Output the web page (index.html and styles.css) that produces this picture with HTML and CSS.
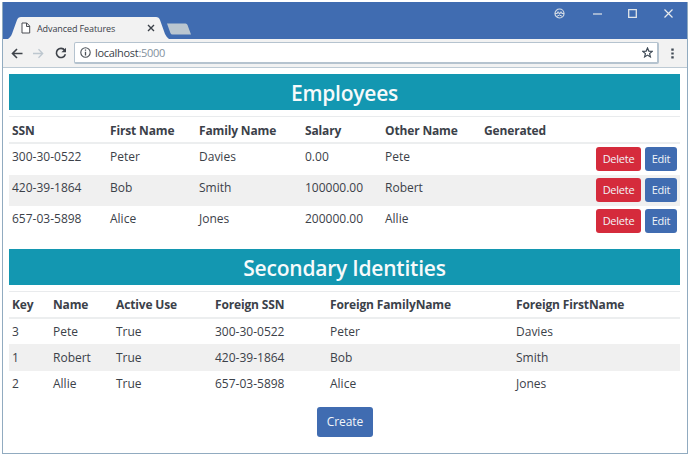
FILE: index.html
```html
<!DOCTYPE html>
<html lang="en">
<head>
<meta charset="utf-8">
<title>Advanced Features</title>
<link rel="stylesheet" href="styles.css">
</head>
<body>
<div class="window">
  <header class="titlebar">
    <div class="tab">
      <svg class="tab-shape" width="166" height="22" viewBox="0 0 166 22"><path d="M0 22 C3 20 4 17 5 14 L9 3 Q10 0 13 0 H148 Q151 0 152 3 L157 17 Q159 21 161 22Z" fill="#f2f2f2"/></svg>
      <svg class="page-icon" width="10" height="12" viewBox="0 0 10 12"><path d="M1 1H5.8L8.7 4V11H1ZM5.5 1V4.5H8.7" fill="#fff" stroke="#4a4d52"/></svg>
      <span class="tab-title">Advanced Features</span>
      <svg class="tab-close" width="8" height="8" viewBox="0 0 8 8"><path d="M1 1L7 7M7 1L1 7" stroke="#3b4048" stroke-width="1.4"/></svg>
    </div>
    <svg class="new-tab" width="26" height="12" viewBox="0 0 26 12"><path d="M1 .5H19.5Q21 .5 21.5 2L25 11.5H6.5Q5 11.5 4.4 10Z" fill="#bac6d0"/></svg>
    <div class="controls">
      <svg width="11" height="11" viewBox="0 0 11 11"><circle cx="5.5" cy="5.5" r="4.5" fill="none" stroke="#d4dce5" stroke-width="1.2"/><path d="M1 5.5H3.4V4H4.8V5.5H6.3V4H7.7V5.5H10M2.5 8.5Q5.5 5.5 8.5 8.5" fill="none" stroke="#d4dce5"/></svg>
      <svg width="9" height="11" viewBox="0 0 9 11"><path d="M0 6H9" stroke="#e1e5e8" stroke-width="1.2"/></svg>
      <svg width="9" height="9" viewBox="0 0 9 9"><path d="M.7 .7H8.3V8.3H.7Z" fill="none" stroke="#e1e5e8" stroke-width="1.3"/></svg>
      <svg width="9" height="9" viewBox="0 0 9 9"><path d="M.5 .5L8.5 8.5M8.5 .5L.5 8.5" stroke="#e8ebed" stroke-width="1.2"/></svg>
    </div>
  </header>
  <nav class="toolbar">
    <svg class="back" width="12" height="11" viewBox="0 0 12 11"><path d="M11.5 5.5H1.5M6 1L1.5 5.5L6 10" fill="none" stroke="#3e434a" stroke-width="1.6"/></svg>
    <svg class="forward" width="11" height="11" viewBox="0 0 11 11"><path d="M0 5.5H9.5M5.5 1.3L9.7 5.5L5.5 9.7" fill="none" stroke="#bdc7cf" stroke-width="1.3"/></svg>
    <svg class="reload" width="12" height="12" viewBox="0 0 12 12"><path d="M9.7 3.2A4.6 4.6 0 1 0 10.4 7.3" fill="none" stroke="#3e434a" stroke-width="1.6"/><path d="M11 .7V5.3H6.4Z" fill="#3e434a"/></svg>
    <div class="address">
      <svg width="11" height="11" viewBox="0 0 11 11"><circle cx="5.5" cy="5.5" r="4.7" fill="none" stroke="#4b5158" stroke-width="1.1"/><path d="M5.5 2.5V3.8M5.5 4.8V8.5" stroke="#4b5158" stroke-width="1.3"/></svg>
      <span class="url">localhost<span class="port">:5000</span></span>
      <svg class="star" width="11" height="11" viewBox="0 0 11 11"><path d="M5.5 1L6.8 4.1L10.2 4.4L7.6 6.6L8.4 9.9L5.5 8.1L2.6 9.9L3.4 6.6L.8 4.4L4.2 4.1Z" fill="none" stroke="#3f4a56" stroke-width="1.2"/></svg>
    </div>
    <svg class="menu" width="3" height="11" viewBox="0 0 3 11"><path d="M.3 .5H2.7V2.7H.3ZM.3 4.4H2.7V6.6H.3ZM.3 8.3H2.7V10.5H.3Z" fill="#414a55"/></svg>
  </nav>
  <main>
    <h3>Employees</h3>
    <table class="employees">
      <colgroup><col class="e1"><col class="e2"><col class="e3"><col class="e4"><col class="e5"><col class="e6"><col></colgroup>
      <thead><tr><th>SSN</th><th>First Name</th><th>Family Name</th><th>Salary</th><th>Other Name</th><th>Generated</th><th></th></tr></thead>
      <tbody>
        <tr><td>300-30-0522</td><td>Peter</td><td>Davies</td><td>0.00</td><td>Pete</td><td></td><td><div class="actions"><button class="btn delete">Delete</button><button class="btn edit">Edit</button></div></td></tr>
        <tr><td>420-39-1864</td><td>Bob</td><td>Smith</td><td>100000.00</td><td>Robert</td><td></td><td><div class="actions"><button class="btn delete">Delete</button><button class="btn edit">Edit</button></div></td></tr>
        <tr><td>657-03-5898</td><td>Alice</td><td>Jones</td><td>200000.00</td><td>Allie</td><td></td><td><div class="actions"><button class="btn delete">Delete</button><button class="btn edit">Edit</button></div></td></tr>
      </tbody>
    </table>
    <h3>Secondary Identities</h3>
    <table class="identities">
      <colgroup><col class="s1"><col class="s2"><col class="s3"><col class="s4"><col class="s5"><col></colgroup>
      <thead><tr><th>Key</th><th>Name</th><th>Active Use</th><th>Foreign SSN</th><th>Foreign FamilyName</th><th>Foreign FirstName</th></tr></thead>
      <tbody>
        <tr><td>3</td><td>Pete</td><td>True</td><td>300-30-0522</td><td>Peter</td><td>Davies</td></tr>
        <tr><td>1</td><td>Robert</td><td>True</td><td>420-39-1864</td><td>Bob</td><td>Smith</td></tr>
        <tr><td>2</td><td>Allie</td><td>True</td><td>657-03-5898</td><td>Alice</td><td>Jones</td></tr>
      </tbody>
    </table>
    <button class="btn create">Create</button>
  </main>
</div>
</body>
</html>
```
FILE: styles.css
```css
* { box-sizing: border-box; }
body { margin: 0; padding: 2px; background: #fff; font-family: "Open Sans", "Noto Sans", sans-serif; font-size: 12px; color: #3b4149; }
svg { display: block; flex: none; }
.window { width: 686px; height: 452px; border: 1px solid #91abc0; border-top: 0; overflow: hidden; background: #fff; }
.titlebar { height: 37px; margin: 0 -1px; background: #406cb1; display: flex; align-items: flex-start; }
.tab { position: relative; width: 166px; height: 22px; margin: 15px 0 0 6px; padding-left: 13px; display: flex; align-items: center; }
.tab-shape { position: absolute; left: 0; top: 0; }
.page-icon, .tab-title, .tab-close { position: relative; }
.tab-title { margin-left: 6px; width: 80px; font-size: 9px; letter-spacing: -.1px; white-space: nowrap; }
.tab-close { margin-left: 30px; }
.new-tab { margin: 21px 0 0 -8px; }
.controls { margin: 6px 15px 0 auto; display: flex; align-items: center; height: 11px; }
.controls svg:nth-child(2) { margin-left: 28px; }
.controls svg:nth-child(3) { margin-left: 26px; }
.controls svg:nth-child(4) { margin-left: 27px; }
.toolbar { height: 29px; padding: 0 13px 0 8px; background: #f2f2f2; border-bottom: 1px solid #bdcad4; display: flex; align-items: center; }
.forward { margin-left: 10px; }
.reload { margin-left: 11px; }
.address { width: 585px; height: 22px; margin-left: 7px; padding: 0 4px 0 5px; border: 1px solid #b5c3cf; border-width: 1px 2px 2px 1px; border-radius: 2px; background: #fff; display: flex; align-items: center; }
.url { margin-left: 4px; font-size: 11px; letter-spacing: -.3px; line-height: 16px; }
.port { color: #84929e; }
.star { margin-left: auto; }
.menu { margin-left: auto; }
main { padding: 6px 6px 0; display: flex; flex-direction: column; }
h3 { width: 671px; margin: 0 0 6px; height: 36px; background: #1397b1; color: #f7fafb; font-size: 21px; letter-spacing: -.22px; line-height: 38px; font-weight: 600; text-align: center; }
table { width: 671px; border-collapse: separate; border-spacing: 0; table-layout: fixed; }
th, td { padding: 0 3px; text-align: left; white-space: nowrap; line-height: 16px; }
th { height: 28px; font-weight: 700; letter-spacing: -.15px; border-top: 1px solid #e9ebed; border-bottom: 2px solid #eceeef; }
tbody tr:nth-child(even) { background: #f0f0f0; }
.employees { margin-bottom: 12px; }
.employees th { padding-top: 2px; }
.employees td { height: 31px; vertical-align: top; padding-top: 5px; }
.employees td:last-child { padding-top: 3px; }
.identities td { height: 26px; }
.identities tbody tr:first-child td { height: 25px; padding-top: 1px; }
.identities tbody tr:nth-child(2) td { height: 27px; }
.e1 { width: 98px; } .e2 { width: 89px; } .e3 { width: 106px; } .e4 { width: 80px; } .e5 { width: 99px; } .e6 { width: 105px; }
.s1 { width: 41px; } .s2 { width: 63px; } .s3 { width: 99px; } .s4 { width: 115px; } .s5 { width: 186px; }
.actions { display: flex; justify-content: flex-end; gap: 4px; }
.btn { padding: 0; border: 0; border-radius: 3px; height: 24px; font: 11px/24px "Open Sans", sans-serif; letter-spacing: -.25px; color: #f2f5f8; background: #406cb1; }
.delete { width: 45px; background: #d52b3c; }
.edit { width: 32px; }
.create { width: 56px; height: 30px; margin-top: 10px; align-self: center; font-size: 12px; letter-spacing: -.1px; line-height: 30px; }
```
